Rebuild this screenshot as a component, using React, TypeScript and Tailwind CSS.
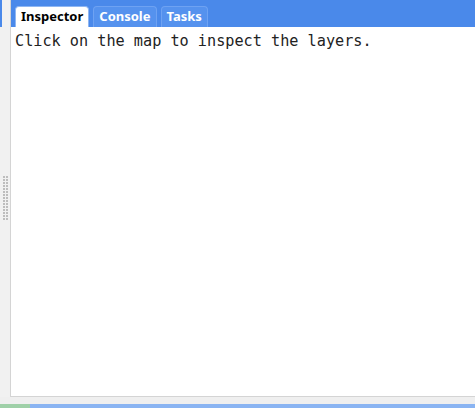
import React from 'react';

const tabs = ['Inspector', 'Console', 'Tasks'];

function Grip() {
  const rows = Array.from({ length: 15 });
  return (
    <div className="flex flex-col gap-[1px]">
      {rows.map((_, i) => (
        <div key={i} className="flex gap-[1px]">
          <div className="w-[2px] h-[2px] bg-[#bdbdbd]" />
          <div className="w-[2px] h-[2px] bg-[#bdbdbd]" />
        </div>
      ))}
    </div>
  );
}

export default function App() {
  const active = 0;

  return (
    <div className="w-[475px] h-[408px] flex flex-col bg-[#f0f0f0] overflow-hidden">
      <div className="flex h-[397px]">
        {/* splitter */}
        <div className="w-[10px] relative bg-[#f1f1f1] flex items-center justify-center">
          <div className="absolute left-0 top-0 w-[2px] h-[27px] bg-[#4a89ea]" />
          <div className="mb-[2px]">
            <Grip />
          </div>
        </div>

        <div className="flex-1 flex flex-col border-l border-b border-[#d4d4d4] bg-white">
          <div className="h-[27px] bg-[#4a89ea] flex items-end gap-[4px] pl-[4px]">
            {tabs.map((t, i) => (
              <div
                key={t}
                className={
                  i === active
                    ? 'h-[21px] px-[5px] rounded-t-[4px] bg-white border border-b-0 border-[#8fb6f2] text-black flex items-center text-[13px] font-bold'
                    : 'h-[21px] px-[5px] rounded-t-[4px] bg-[#5592ee] border border-b-0 border-[#6ea2f2] text-white flex items-center text-[13px] font-bold'
                }
                style={{ fontFamily: '"Noto Sans", sans-serif' }}
              >
                {t}
              </div>
            ))}
          </div>
          <div
            className="flex-1 px-[4px] pt-[5px] text-[15.2px] leading-[18px] text-[#222]"
            style={{ fontFamily: '"DejaVu Sans Mono", monospace' }}
          >
            Click on the map to inspect the layers.
          </div>
        </div>
      </div>

      <div className="h-[7px] bg-[#efefef]" />
      <div className="h-[4px] flex">
        <div className="w-[30px] bg-[#9fd0a8]" />
        <div className="flex-1 bg-[#8ab4f2]" />
      </div>
    </div>
  );
}
